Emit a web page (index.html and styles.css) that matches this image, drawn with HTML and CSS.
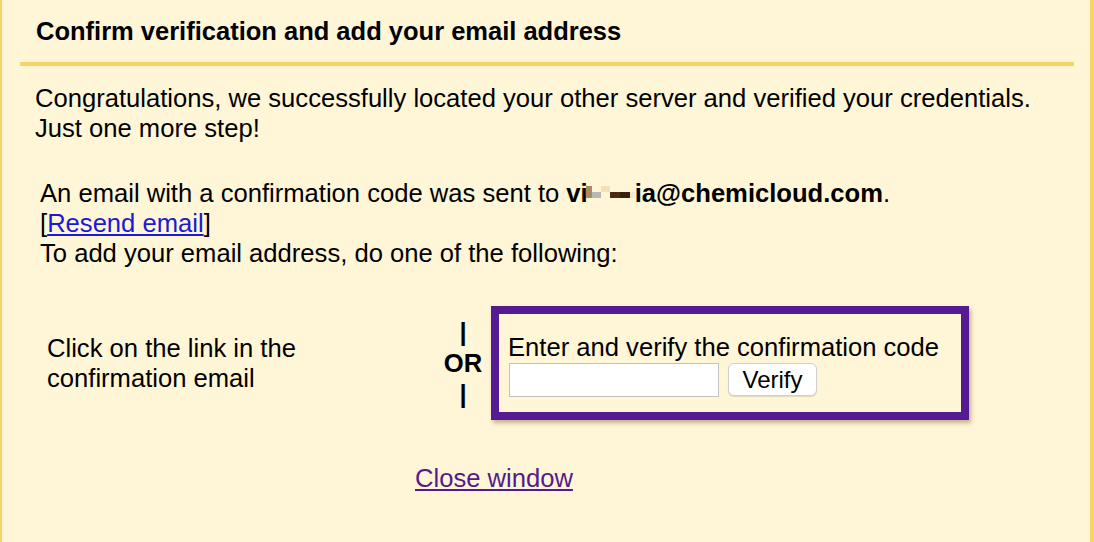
FILE: index.html
```html
<!DOCTYPE html>
<html>
<head>
<meta charset="utf-8">
<link rel="stylesheet" href="styles.css">
</head>
<body>
<div class="panel">
  <div class="header">
    <h1 class="title">Confirm verification and add your email address</h1>
  </div>
  <div class="rule"></div>
  <p class="intro">Congratulations, we successfully located your other server and verified your credentials.<br>Just one more step!</p>
  <div class="sent">
    An email with a confirmation code was sent to <b class="addr">vi<span class="blur"><span class="b1"></span><span class="b2"></span><span class="b3"></span><span class="b4"></span><span class="b5"></span><span class="b6"></span></span>ia@chemicloud.com</b>.<br>
    [<a class="resend" href="#">Resend email</a>]<br>
    To add your email address, do one of the following:
  </div>
  <div class="options">
    <div class="opt-left">Click on the link in the<br>confirmation email</div>
    <div class="opt-or"><span>|</span><span>OR</span><span>|</span></div>
    <div class="opt-box">
      <div class="box-label">Enter and verify the confirmation code</div>
      <div class="box-row">
        <input class="code" type="text">
        <button class="verify" type="button">Verify</button>
      </div>
    </div>
  </div>
  <div class="close-row"><a class="close" href="#">Close window</a></div>
</div>
</body>
</html>
```
FILE: styles.css
```css
html, body {
  margin: 0;
  padding: 0;
  background: #fff5d7;
}
body {
  font-family: "Liberation Sans", Arial, sans-serif;
  color: #000;
}
.panel {
  box-sizing: border-box;
  height: 542px;
  border-left: 2px solid #f9d26a;
  border-right: 4px solid #f9d26a;
  background: #fff5d7;
}
.header {
  padding: 16px 0 0 34px;
  height: 62px;
  box-sizing: border-box;
}
.title {
  margin: 0;
  font-size: 25.5px;
  font-weight: bold;
  line-height: 30px;
}
.rule {
  height: 4px;
  background: #f9d26a;
  margin: 0 16px 0 18px;
}
.intro {
  margin: 0;
  padding: 17px 0 0 33px;
  font-size: 25.6px;
  line-height: 30px;
}
.sent {
  padding: 35px 0 0 38px;
  font-size: 25.6px;
  line-height: 30px;
}
.addr {
  font-weight: bold;
}
.blur {
  display: inline-flex;
  align-items: flex-end;
  height: 12px;
  margin: 0 0 0 -2px;
  vertical-align: 4px;
}
.blur span {
  display: block;
  height: 6px;
}
.b1 { width: 6px; height: 12px !important; background: #a98a62; }
.b2 { width: 9px; background: #b7b9b0; }
.b3 { width: 9px; align-self: flex-start; background: #f3dfb9; }
.b4 { width: 10px; background: #4a2c12; }
.b5 { width: 10px; background: #3a200c; }
.b6 { width: 5px; background: #efe9d0; }
.resend {
  color: #1a1ad6;
  text-decoration: underline;
}
.options {
  display: flex;
  align-items: center;
  margin-top: 38px;
}
.opt-left {
  width: 442px;
  box-sizing: border-box;
  padding-left: 45px;
  font-size: 25.6px;
  line-height: 30px;
}
.opt-or {
  width: 38px;
  display: flex;
  flex-direction: column;
  align-items: center;
  font-size: 25.6px;
  font-weight: bold;
  line-height: 31px;
  margin-right: 9px;
}
.opt-box {
  width: 478px;
  height: 114px;
  box-sizing: border-box;
  border: 8px solid #541b93;
  box-shadow: 2px 3px 4px rgba(120, 100, 60, 0.45);
  padding: 20px 0 0 9px;
}
.box-label {
  font-size: 25.6px;
  line-height: 26px;
}
.box-row {
  display: flex;
  align-items: flex-start;
  margin-top: 3px;
}
.code {
  width: 210px;
  height: 34px;
  box-sizing: border-box;
  margin: 0 0 0 1px;
  border: 1px solid #c2c2c2;
  background: #fff;
  padding: 0 4px;
  font-size: 18px;
}
.verify {
  margin-left: 9px;
  width: 89px;
  height: 33px;
  box-sizing: border-box;
  border: 1px solid #cfcfcf;
  border-radius: 6px;
  background: #fff;
  box-shadow: 0 1px 1px rgba(0,0,0,0.12);
  font-family: "Liberation Sans", Arial, sans-serif;
  font-size: 24px;
  color: #000;
  padding: 0;
}
.close-row {
  padding: 43px 0 0 413px;
  font-size: 25.6px;
  line-height: 30px;
}
.close {
  color: #551a8b;
  text-decoration: underline;
}
```
